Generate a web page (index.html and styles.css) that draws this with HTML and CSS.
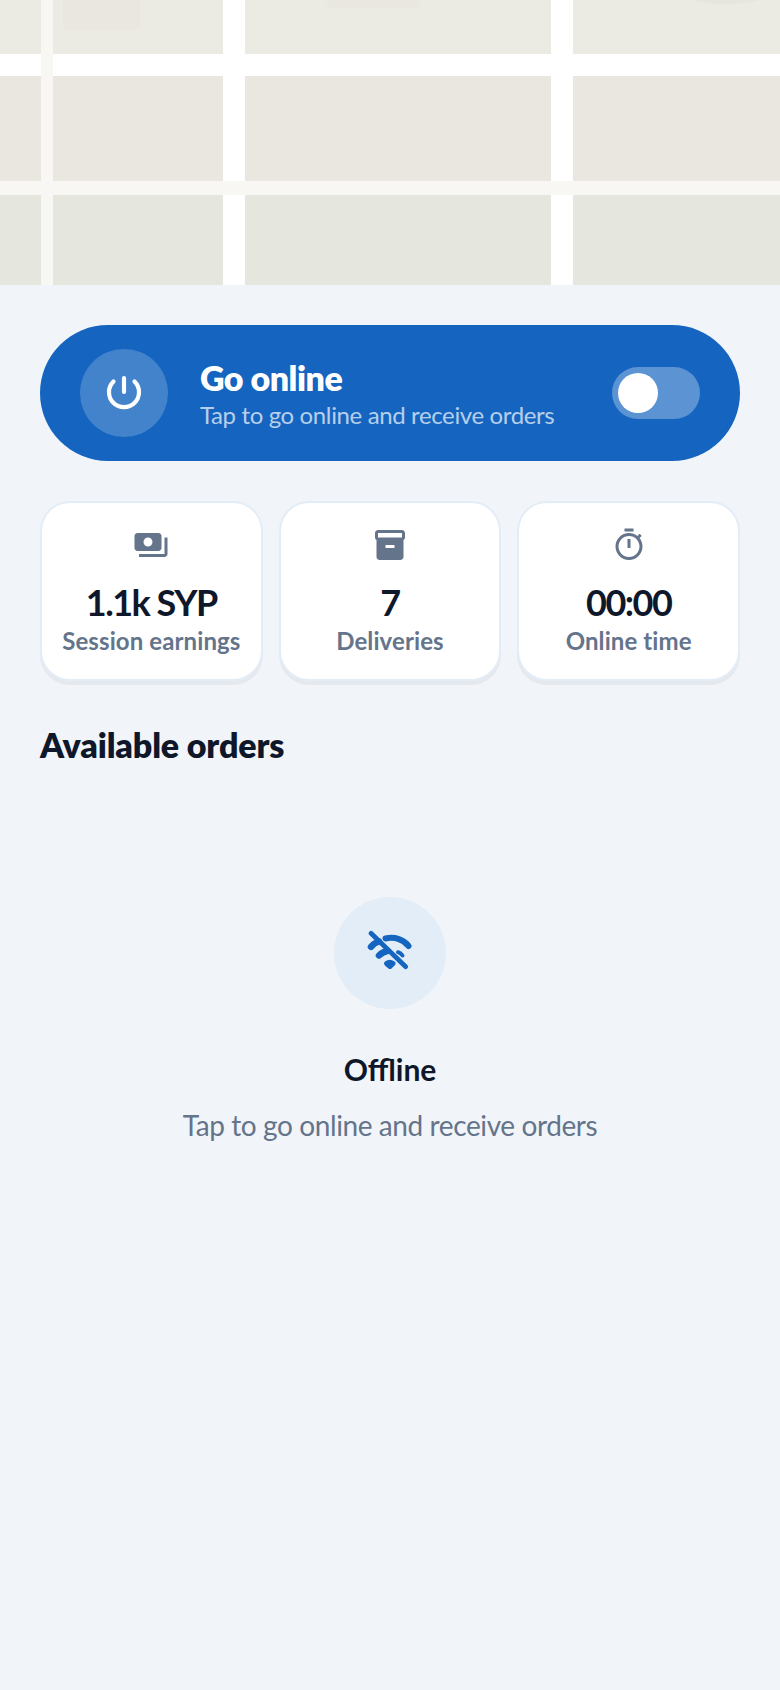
FILE: index.html
```html
<!DOCTYPE html>
<html lang="en">
<head>
  <meta charset="UTF-8">
  <meta name="viewport" content="width=device-width, initial-scale=1">
  <title>Driver Home</title>
  <link rel="stylesheet" href="styles.css">
</head>
<body>
  <div class="map">
    <svg width="780" height="285" viewBox="0 0 780 285">
      <rect width="780" height="54" fill="#ebebe3"/>
      <rect y="76" width="780" height="105" fill="#e9e7e0"/>
      <rect y="195" width="780" height="90" fill="#e5e6dd"/>
      <rect x="63" y="-10" width="77" height="40" rx="5" fill="#e9e7df"/>
      <rect x="327" y="-10" width="93" height="18" rx="5" fill="#e9e7df"/>
      <ellipse cx="726" cy="-16" rx="56" ry="20" fill="#e6e6dd"/>
      <rect y="54" width="780" height="22" fill="#fff"/>
      <rect x="223" width="22" height="285" fill="#fff"/>
      <rect x="551" width="22" height="285" fill="#fff"/>
      <rect y="181" width="780" height="14" fill="#f8f7f3"/>
      <rect x="41" width="12" height="285" fill="#f8f7f3"/>
    </svg>
  </div>

  <div class="content">
    <div class="status-card">
      <div class="power-circle">
        <svg width="44" height="44" viewBox="0 0 44 44" fill="none" stroke="#fff" stroke-width="4.200" stroke-linecap="round">
          <path d="M22 7v14"/>
          <path d="M11.500 10.500a15 15 0 1 0 21 0"/>
        </svg>
      </div>
      <div class="status-text">
        <div class="status-title">Go online</div>
        <div class="status-sub">Tap to go online and receive orders</div>
      </div>
      <div class="toggle"><div class="thumb"></div></div>
    </div>

    <div class="stats">
      <div class="stat-card">
        <svg class="stat-icon" viewBox="0 0 24 24"><path d="M19 14V6c0-1.1-.9-2-2-2H3c-1.1 0-2 .9-2 2v8c0 1.1.9 2 2 2h14c1.1 0 2-.9 2-2zm-9-1c-1.66 0-3-1.34-3-3s1.34-3 3-3 3 1.34 3 3-1.34 3-3 3zm13-6v11c0 1.1-.9 2-2 2H4v-2h17V7h2z"/></svg>
        <div class="stat-value">1.1k SYP</div>
        <div class="stat-label">Session earnings</div>
      </div>
      <div class="stat-card">
        <svg class="stat-icon" viewBox="0 0 24 24"><path d="M20 2H4c-1 0-2 .9-2 2v3.01c0 .72.43 1.34 1 1.69V20c0 1.1 1.1 2 2 2h14c.9 0 2-.9 2-2V8.7c.57-.35 1-.97 1-1.69V4c0-1.1-1-2-2-2zm-5 12H9v-2h6v2zm5-7H4V4l16-.02V7z"/></svg>
        <div class="stat-value">7</div>
        <div class="stat-label">Deliveries</div>
      </div>
      <div class="stat-card">
        <svg class="stat-icon" viewBox="0 0 24 24"><path d="M15 1H9v2h6V1zm-4 13h2V8h-2v6zm8.03-6.61l1.42-1.42c-.43-.51-.9-.99-1.41-1.41l-1.42 1.42C16.07 4.74 14.12 4 12 4c-4.97 0-9 4.03-9 9s4.02 9 9 9 9-4.03 9-9c0-2.12-.74-4.07-1.97-5.61zM12 20c-3.87 0-7-3.13-7-7s3.13-7 7-7 7 3.13 7 7-3.13 7-7 7z"/></svg>
        <div class="stat-value">00:00</div>
        <div class="stat-label">Online time</div>
      </div>
    </div>

    <h2 class="section-title">Available orders</h2>

    <div class="empty">
      <div class="empty-circle">
        <svg width="48" height="48" viewBox="0 0 48 48" fill="none" stroke="#1565c0" stroke-linecap="round">
          <path d="M5 4.300L39.700 37.700" stroke-width="4.800"/>
          <path d="M19.500 9.500C29 7.500 38 10.500 42.500 17" stroke-width="6"/>
          <path d="M5 17.800C7 15.500 9.500 13.500 13 12.500" stroke-width="6.500"/>
          <path d="M13 26.500C15.500 24 18 22.500 21.500 22" stroke-width="6.500"/>
          <path d="M32 23.200C34 23.800 35.500 25 36.500 26.500" stroke-width="4"/>
          <path d="M20.500 34.500C22.500 33 25 33 27 34.500L24 37.500Z" fill="#1565c0" stroke-width="5" stroke-linejoin="round"/>
        </svg>
      </div>
      <div class="empty-title">Offline</div>
      <div class="empty-sub">Tap to go online and receive orders</div>
    </div>
  </div>
</body>
</html>
```

FILE: styles.css
```css
body {
  font-family: Lato, "Open Sans", sans-serif;
  background: #f1f5f9;
  color: #0f172a;
  margin: 0;
  min-height: 100vh;
}
.map {
  height: 285px;
  overflow: hidden;
}
.map svg {
  display: block;
}
.content {
  padding: 40px;
}
.status-card {
  background: #1565c0;
  color: white;
  height: 136px;
  box-sizing: border-box;
  padding: 0 40px;
  border-radius: 68px;
  display: flex;
  align-items: center;
  gap: 32px;
}
.power-circle {
  width: 88px;
  height: 88px;
  border-radius: 50%;
  background: rgba(255, 255, 255, 0.2);
  display: flex;
  align-items: center;
  justify-content: center;
}
.status-text {
  flex: 1;
}
.status-title {
  font-size: 34px;
  font-weight: 800;
  letter-spacing: -0.5px;
  line-height: 40px;
  margin-top: 2px;
}
.status-sub {
  font-size: 24px;
  letter-spacing: -0.37px;
  line-height: 32px;
  margin-top: 1px;
  color: rgba(255, 255, 255, 0.7);
}
.toggle {
  width: 88px;
  height: 52px;
  box-sizing: border-box;
  padding: 6px;
  border-radius: 26px;
  background: rgba(255, 255, 255, 0.3);
}
.thumb {
  width: 40px;
  height: 40px;
  border-radius: 50%;
  background: white;
}
.stats {
  display: flex;
  gap: 16px;
  margin-top: 40px;
}
.stat-card {
  flex: 1;
  background: white;
  border: 2px solid #e3edf7;
  border-radius: 30px;
  box-shadow: 0 4px 0 #e5e9ee;
  box-sizing: border-box;
  height: 180px;
  padding-top: 24px;
  text-align: center;
}
.stat-icon {
  display: block;
  width: 36px;
  height: 36px;
  margin: 0 auto;
  fill: #64748b;
}
.stat-value {
  font-size: 36px;
  font-weight: 700;
  letter-spacing: -1.5px;
  line-height: 44px;
  margin-top: 17px;
}
.stat-label {
  font-size: 24px;
  font-weight: 700;
  letter-spacing: 0.1px;
  line-height: 32px;
  color: #64748b;
  margin-top: 1px;
}
.section-title {
  font-size: 34px;
  font-weight: 800;
  letter-spacing: -0.15px;
  line-height: 40px;
  margin: 44px 0 0;
}
.empty {
  display: flex;
  flex-direction: column;
  align-items: center;
  margin-top: 132px;
}
.empty-circle {
  width: 112px;
  height: 112px;
  border-radius: 50%;
  background: #e3edf7;
  display: flex;
  align-items: center;
  justify-content: center;
}
.empty-title {
  font-size: 30px;
  font-weight: 700;
  line-height: 38px;
  margin-top: 41px;
}
.empty-sub {
  font-size: 28px;
  letter-spacing: -0.4px;
  line-height: 36px;
  color: #64748b;
  margin-top: 19px;
}
```
